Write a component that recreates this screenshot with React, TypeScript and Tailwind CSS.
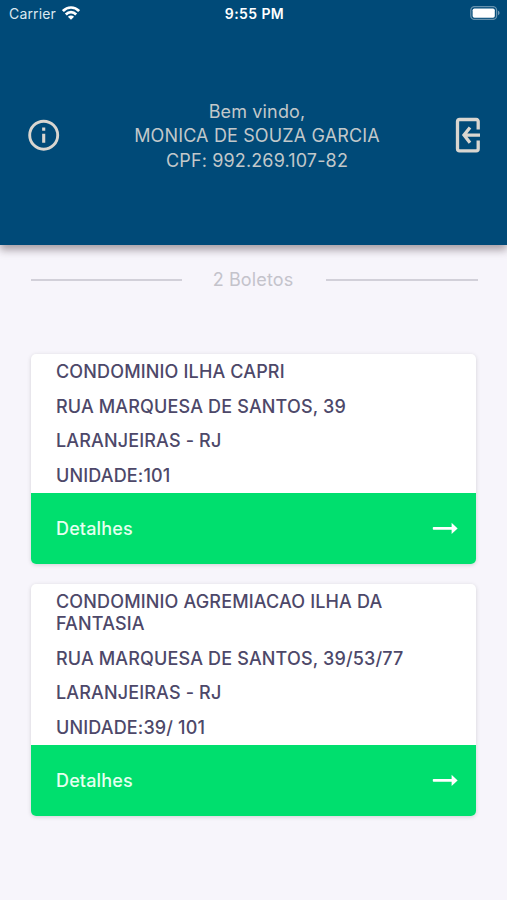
import React from "react";

type Boleto = { name: string; street: string; district: string; unit: string };

const boletos: Boleto[] = [
  {
    name: "CONDOMINIO ILHA CAPRI",
    street: "RUA MARQUESA DE SANTOS, 39",
    district: "LARANJEIRAS - RJ",
    unit: "UNIDADE:101",
  },
  {
    name: "CONDOMINIO AGREMIACAO ILHA DA FANTASIA",
    street: "RUA MARQUESA DE SANTOS, 39/53/77",
    district: "LARANJEIRAS - RJ",
    unit: "UNIDADE:39/ 101",
  },
];

function WifiIcon() {
  return (
    <svg width="18" height="14" viewBox="0 0 18 14" fill="none" stroke="#fff" strokeWidth="2.7">
      <path d="M0.9 5.1C5.5 0.3 12.5 0.3 17.1 5.1" />
      <path d="M3.8 8.5C6.9 5.4 11.1 5.4 14.2 8.5" />
      <path d="M9 13.8L5.9 10.7C7.6 9 10.4 9 12.1 10.7Z" fill="#fff" stroke="none" />
    </svg>
  );
}

function BatteryIcon() {
  return (
    <svg width="30" height="14" viewBox="0 0 30 14" fill="none">
      <rect x="0.8" y="0.6" width="25.8" height="12.8" rx="3.6" stroke="#fff" strokeOpacity="0.4" strokeWidth="1.3" />
      <rect x="2.6" y="2.5" width="22.2" height="9.2" rx="1.8" fill="#fff" />
      <path d="M28 4.8C30 5.4 30 8.6 28 9.2Z" fill="#fff" fillOpacity="0.45" />
    </svg>
  );
}

function InfoIcon() {
  return (
    <svg width="32" height="32" viewBox="0 0 32 32" fill="none">
      <circle cx="15.7" cy="16.2" r="14" stroke="#d9d6d0" strokeWidth="2.9" />
      <path d="M15.7 14.8V23.8M15.7 8.6V11.8" stroke="#d9d6d0" strokeWidth="3.1" />
    </svg>
  );
}

function ExitIcon() {
  return (
    <svg width="26" height="36" viewBox="0 0 26 36" fill="none" stroke="#d9d6d0" strokeWidth="3.3">
      <path d="M23.2 12.4V4.6Q23.2 2.5 21.2 2.5H4.6Q2.5 2.5 2.5 4.6V31.8Q2.5 33.9 4.6 33.9H21.2Q23.2 33.9 23.2 31.8V23.6" />
      <path d="M25 18.1H9.6M15 10.5L9 18.1L15 25.7" />
    </svg>
  );
}

function ArrowIcon() {
  return (
    <svg width="26" height="14" viewBox="0 0 26 14" fill="#fff">
      <rect x="0.8" y="5" width="20" height="2.8" rx="0.8" />
      <path d="M19.6 0.8L25.6 6.4L19.6 12Z" />
    </svg>
  );
}

function Card({ boleto }: { boleto: Boleto }) {
  return (
    <article className="overflow-hidden rounded-[5px] bg-white shadow-[0_1px_4px_rgba(0,0,0,0.15)]">
      <div className="px-[25px] pt-px text-[18px] leading-[22.2px] font-[460] tracking-[0.15px] text-[#4d4869]">
        <p className="w-[345px] py-[6.15px]">{boleto.name}</p>
        <p className="py-[6.15px]">{boleto.street}</p>
        <p className="py-[6.15px]">{boleto.district}</p>
        <p className="py-[6.15px]">{boleto.unit}</p>
      </div>
      <button className="flex h-[71.4px] w-full items-center justify-between bg-[#00df6e] pr-[18px] pl-[25px] text-[18px] font-[460] tracking-[0.15px] text-[#e6fff0]">
        <span>Detalhes</span>
        <ArrowIcon />
      </button>
    </article>
  );
}

export default function App() {
  return (
    <div className="h-[900px] w-full overflow-hidden bg-[#f7f5fb] font-['Inter',sans-serif]">
      <header className="h-[245px] bg-[#004a78] shadow-[0_5px_8px_rgba(40,20,30,0.38)]">
        <div className="grid h-[26px] grid-cols-3 items-center pr-[7px] pl-[9px] text-[14px] text-white">
          <div className="flex items-center gap-[6px] tracking-[0.15px] text-[#dbe8f0]">
            <span>Carrier</span>
            <WifiIcon />
          </div>
          <span className="text-center font-semibold tracking-[0.4px]">9:55 PM</span>
          <div className="flex justify-end">
            <BatteryIcon />
          </div>
        </div>
        <div className="flex items-center justify-between pt-[72px] pr-[26px] pl-[28px]">
          <InfoIcon />
          <div className="pt-[2px] pr-px text-center text-[18px] leading-[24.3px] tracking-[0.14px] text-[#c2c8ca]">
            <p>Bem vindo,</p>
            <p>MONICA DE SOUZA GARCIA</p>
            <p>CPF: 992.269.107-82</p>
          </div>
          <ExitIcon />
        </div>
      </header>
      <main className="px-[31px]">
        <div className="-mr-0.5 flex h-[69px] items-center justify-between text-[18px] tracking-[0.14px] text-[#c4c3cb]">
          <span className="h-[2px] w-[151px] bg-[#d2d0d9]" />
          <span className="pr-[2px]">2 Boletos</span>
          <span className="h-[2px] w-[152px] bg-[#d2d0d9]" />
        </div>
        <div className="flex flex-col gap-[19.5px] pt-[40px]">
          {boletos.map((b) => (
            <Card key={b.name} boleto={b} />
          ))}
        </div>
      </main>
    </div>
  );
}
